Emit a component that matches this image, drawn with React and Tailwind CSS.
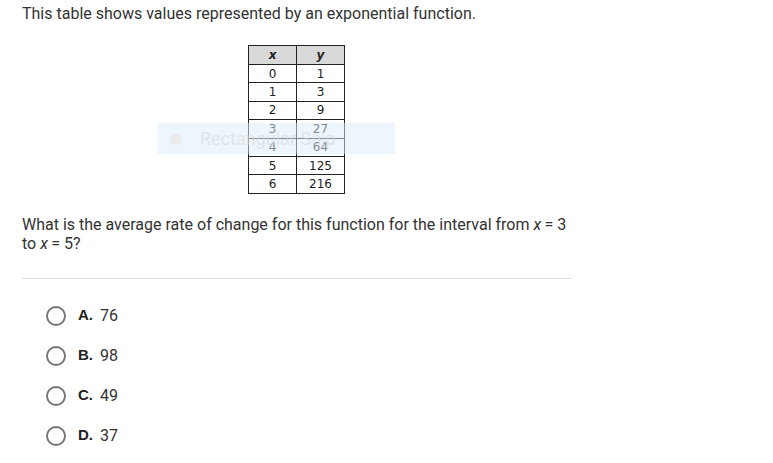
import React from "react";

const rows = [
  ["0", "1"],
  ["1", "3"],
  ["2", "9"],
  ["3", "27"],
  ["4", "64"],
  ["5", "125"],
  ["6", "216"],
];

const options = [
  ["A.", "76"],
  ["B.", "98"],
  ["C.", "49"],
  ["D.", "37"],
];

export default function App() {
  return (
    <div className="relative w-[773px] h-[463px] bg-white overflow-hidden font-['Roboto',sans-serif] text-[#333333]">
      <div className="pl-[22px] pt-[4px]">
        <p className="text-[16px] leading-[20px]">
          This table shows values represented by an exponential function.
        </p>
        <div className="flex pl-[226px] pt-[21px]">
          <table className="border-collapse font-['DejaVu_Sans',Verdana,sans-serif] text-[12px] text-[#222]">
            <thead>
              <tr className="bg-[#d9d9d9]">
                <th className="w-[48px] h-[19px] border border-[#222] font-bold italic leading-none p-0">x</th>
                <th className="w-[48px] h-[19px] border border-[#222] font-bold italic leading-none p-0">y</th>
              </tr>
            </thead>
            <tbody>
              {rows.map(([x, y]) => (
                <tr key={x}>
                  <td className="h-[18.4px] border border-[#222] text-center leading-none p-0">{x}</td>
                  <td className="h-[18.4px] border border-[#222] text-center leading-none p-0">{y}</td>
                </tr>
              ))}
            </tbody>
          </table>
        </div>
        <p className="text-[16px] leading-[19px] mt-[21px] w-[560px]">
          What is the average rate of change for this function for the interval from <i>x</i>&#8201;= 3
          <br />
          to <i>x</i>&#8201;= 5?
        </p>
        <div className="w-[550px] h-px bg-[#dddddd] mt-[25px]"></div>
        <div className="flex flex-col gap-[20px] pt-[27px] pl-[24px]">
          {options.map(([l, v]) => (
            <div key={l} className="flex items-center h-[20px]">
              <span className="w-[20px] h-[20px] rounded-full border-2 border-[#767676]"></span>
              <span className="ml-[12px] font-['Liberation_Sans',Arial,sans-serif] font-bold text-[15px] text-[#222]">{l}</span>
              <span className="ml-[7px] text-[16px] text-[#333]">{v}</span>
            </div>
          ))}
        </div>
      </div>
      <div className="absolute left-[158px] top-[123px] w-[237px] h-[31px] bg-[#dcebfb]/50 flex items-center pointer-events-none">
        <span className="ml-[12px] w-[12px] h-[12px] rounded-full bg-[#e6e6e6]/70"></span>
        <span className="ml-[18px] text-[18px] text-[#d8d8d8]/60 font-['Roboto',sans-serif]">Rectangular Snip</span>
      </div>
    </div>
  );
}
